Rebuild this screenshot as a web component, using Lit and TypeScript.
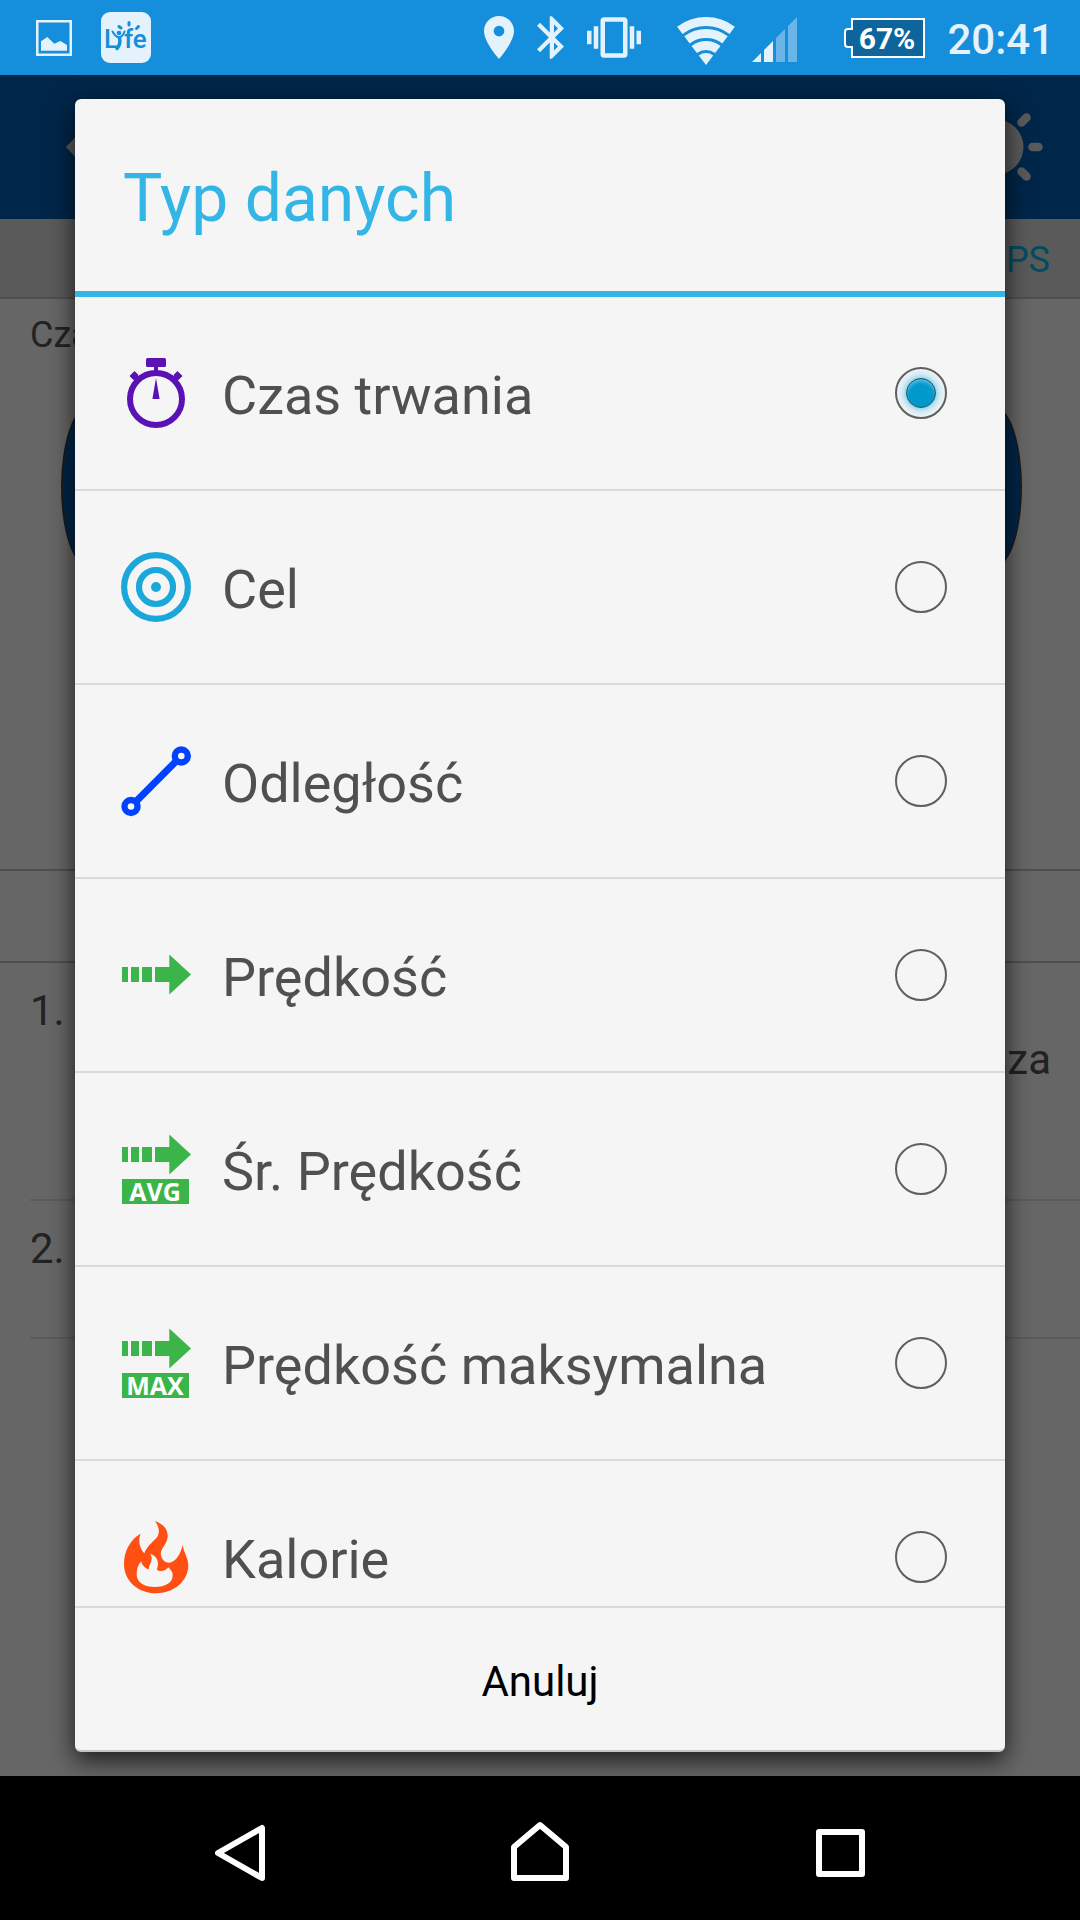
import { LitElement, html, svg, css } from "lit";
import type { SVGTemplateResult } from "lit";
import { customElement, state, property } from "lit/decorators.js";

type IconName = "time" | "target" | "distance" | "speed" | "avg" | "max" | "fire";

interface DataType {
  id: string;
  label: string;
  icon: IconName;
}

const DATA_TYPES: DataType[] = [
  { id: "duration", label: "Czas trwania", icon: "time" },
  { id: "goal", label: "Cel", icon: "target" },
  { id: "distance", label: "Odległość", icon: "distance" },
  { id: "speed", label: "Prędkość", icon: "speed" },
  { id: "avg-speed", label: "Śr. Prędkość", icon: "avg" },
  { id: "max-speed", label: "Prędkość maksymalna", icon: "max" },
  { id: "calories", label: "Kalorie", icon: "fire" },
];

/* Dashed arrow; cy is the vertical centre of its shaft. */
const arrow = (cy: number) => svg`
  <g fill="#3bb54a" transform="translate(0 ${cy})">
    <path d="M2-7.5h6v15H2zM11-7.5h8v15h-8zM22-7.5h10v15H22zM35-7.5h14.3V-20L71 0 49.3 20V7.5H35z"/>
  </g>`;

const badge = (label: string) => svg`
  <rect x="2" y="46" width="67" height="25" fill="#3bb54a"/>
  <text x="35" y="68" text-anchor="middle" fill="#fff" font-family="'Open Sans', sans-serif"
    font-weight="700" font-size="25">${label}</text>`;

const ICONS: Record<IconName, SVGTemplateResult> = {
  time: svg`
    <g fill="#5a12b4">
      <rect x="26" y="1" width="20" height="9" rx="1.5"/>
      <rect x="34" y="9" width="4" height="6"/>
      <path d="M36 21l3.6 21h-7.2z"/>
    </g>
    <g fill="none" stroke="#5a12b4">
      <circle cx="36" cy="42" r="26" stroke-width="6"/>
      <path d="M12 16.5l4 4M60 16.5l-4 4" stroke-width="7"/>
      <path d="M14 18.5l6 6M58 18.5l-6 6" stroke-width="6"/>
    </g>`,
  target: svg`
    <g fill="none" stroke="#1ba7da" stroke-width="6.2">
      <circle cx="36" cy="36" r="31.9"/>
      <circle cx="36" cy="36" r="17"/>
    </g>
    <circle cx="36" cy="36" r="5" fill="#1ba7da"/>`,
  distance: svg`
    <g fill="none" stroke="#0042ff" stroke-width="6.4">
      <circle cx="61.3" cy="11" r="6.5"/>
      <circle cx="11" cy="61.5" r="6.5"/>
      <path d="M16 56.5L56.3 16" stroke-width="7"/>
    </g>`,
  speed: arrow(35.5),
  avg: svg`${arrow(21.5)}${badge("AVG")}`,
  max: svg`${arrow(21.5)}${badge("MAX")}`,
  fire: svg`
    <path fill="#ff4f12" fill-rule="evenodd" d="M35 .3C42.5 2.5 48.5 8 47.6 16.5C47 23 41 27 40.8 32.5
      C41 38 44.5 41.5 48.8 41.7C56 41.3 60.5 33 62.7 24C63.5 31 68 36 68.3 44
      C68.5 60 54 72.3 36 72.3C18 72.3 4 60 4 43C4 30.5 10 19 20.5 12.8
      C18 20 19.5 27.500 24.3 32.3C26.5 26 32 21.5 35.5 18C40.500 13 39.5 6 35 .3Z
      M21.2 40.300C22 44.500 24.500 47 29 48.500C28 43 34.500 40 30.300 33C36.500 34.500 40 41 36.800 48.500
      C40 51.500 45.500 50 48.300 46.300C50 48.500 52.700 50 52.700 54.500C52.500 62 45 66 35 66
      C24.500 66 16.700 61.500 16.700 53.500C16.700 48 18 44 21.200 40.300Z"/>`,
};

@customElement("status-bar")
class StatusBar extends LitElement {
  static styles = css`
    :host {
      display: flex;
      align-items: center;
      height: 75px;
      padding: 0 26px 0 36px;
      background: #158edb;
      color: #e4f2fb;
      font-family: Roboto, sans-serif;
    }
    svg {
      display: block;
      flex: none;
    }
    .notifications,
    .radio-state,
    .signal-state,
    .power {
      display: flex;
      align-items: center;
    }
    .notifications {
      gap: 29px;
      margin-right: auto;
    }
    .radio-state {
      gap: 23px;
    }
    .signal-state {
      gap: 17px;
      margin-left: 36px;
    }
    .power {
      gap: 22px;
      margin-left: 47px;
    }
    .clock {
      font-size: 42px;
      font-weight: 500;
      line-height: 48px;
      padding-top: 4px;
    }
  `;

  render() {
    return html`
      <div class="notifications">
        <svg width="36" height="36" viewBox="0 0 36 36">
          <rect x="1.25" y="1.25" width="33.5" height="33.5" fill="none" stroke="#e4f2fb" stroke-width="2.5" />
          <path fill="#e4f2fb" d="M5 21.3L11.3 17l7 6.7L24.3 21 31 25v5.7H5z" />
        </svg>
        <svg width="50" height="51" viewBox="0 0 50 51">
          <rect width="50" height="51" rx="9" fill="#e4f2fb" />
          <g fill="#158edb" font-family="Roboto, sans-serif" font-weight="500" font-size="26">
            <text x="3" y="36">L</text>
            <text x="23" y="36">fe</text>
          </g>
          <g stroke="#158edb" fill="none" stroke-linecap="round">
            <path d="M11.5 19.5Q14 24.5 18 25.5Q22 24.5 23.5 19.5" stroke-width="2" />
            <path d="M18.5 26Q20 32 16 36.5" stroke-width="3.5" />
            <path d="M18 14.5l2 1.5M28 10.5v2.5M37.5 14.5L35.5 16.5" stroke-width="3" />
          </g>
          <circle cx="18" cy="21" r="2.3" fill="#158edb" />
        </svg>
      </div>
      <div class="radio-state">
        <svg width="30" height="43" viewBox="5 2 14 20">
          <path
            fill="#e4f2fb"
            d="M12 2C8.13 2 5 5.13 5 9c0 5.25 7 13 7 13s7-7.75 7-13c0-3.87-3.13-7-7-7zm0 9.5a2.5 2.5 0 0 1 0-5 2.5 2.5 0 0 1 0 5z"
          />
        </svg>
        <svg width="27" height="43" viewBox="5 2 12.71 20">
          <path
            fill="#e4f2fb"
            d="M17.71 7.71L12 2h-1v7.59L6.41 5 5 6.41 10.59 12 5 17.59 6.41 19 11 14.41V22h1l5.71-5.71-4.3-4.29 4.3-4.29zM13 5.83l1.88 1.88L13 9.59V5.83zm1.88 10.46L13 18.17v-3.76l1.88 1.88z"
          />
        </svg>
        <svg width="54" height="41" viewBox="0 3 24 18">
          <path
            fill="#e4f2fb"
            d="M0 15h2V9H0v6zm3 2h2V7H3v10zm19-8v6h2V9h-2zm-3 8h2V7h-2v10zM16.5 3h-9C6.67 3 6 3.67 6 4.5v15c0 .83.67 1.5 1.5 1.5h9c.83 0 1.5-.67 1.5-1.5v-15c0-.83-.67-1.5-1.5-1.5zM16 19H8V5h8v14z"
          />
        </svg>
      </div>
      <div class="signal-state">
        <svg width="58" height="54" viewBox="0 0 58 54">
          <g fill="none" stroke="#e4f2fb" stroke-width="9">
            <path d="M2.8 19.3A43.5 43.5 0 0 1 55.2 19.3" />
            <path d="M10 28.9A31.5 31.5 0 0 1 48 28.9" />
            <path d="M17.2 38.5A19.5 19.5 0 0 1 40.8 38.5" />
          </g>
          <path fill="#e4f2fb" d="M29 54L21.8 44.4A12 12 0 0 1 36.2 44.4z" />
        </svg>
        <svg width="45" height="48" viewBox="0 0 45 48">
          <path fill="#e4f2fb" d="M0 48L9 39v9zM12 36L21 27v21h-9z" />
          <path fill="#6ab5e8" d="M24 24L33 15v33h-9zM36 12L45 3v45h-9z" />
        </svg>
      </div>
      <div class="power">
        <svg width="81" height="40" viewBox="0 0 81 40">
          <path fill="#0d659c" stroke="#fff" stroke-width="2" d="M8 1h72v38H8V29H4q-3 0-3-3V14q0-3 3-3h4z" />
          <text x="43" y="31" text-anchor="middle" fill="#fff" font-family="Roboto, sans-serif" font-weight="700" font-size="30">67%</text>
        </svg>
        <time class="clock">20:41</time>
      </div>
    `;
  }
}

@customElement("training-screen")
class TrainingScreen extends LitElement {
  static styles = css`
    :host {
      display: flex;
      flex-direction: column;
      background: #fff;
      color: #555;
      font-family: Roboto, sans-serif;
    }
    .app-bar {
      display: flex;
      align-items: center;
      justify-content: space-between;
      height: 144px;
      padding: 0 36px 0 66px;
      box-sizing: border-box;
      background: #005fb6;
    }
    .gps {
      height: 80px;
      padding: 14px 30px 0 0;
      box-sizing: border-box;
      border-bottom: 2px solid #c5c5c5;
      background: #e1e1e1;
      color: #00c0f0;
      font-size: 36px;
      line-height: 54px;
      text-align: right;
    }
    .hero {
      display: flex;
      flex-direction: column;
      gap: 48px;
      height: 570px;
      padding: 12px 30px 0;
      box-sizing: border-box;
    }
    .caption {
      font-size: 36px;
      line-height: 48px;
    }
    .value {
      height: 160px;
      margin: 0 28px 0 31px;
      box-sizing: border-box;
      border: 2px solid #444;
      border-radius: 27px / 80px;
      background: #005fb6;
    }
    .strip {
      height: 90px;
      border: solid #c5c5c5;
      border-width: 2px 0;
    }
    .item {
      display: flex;
      justify-content: space-between;
      min-height: 138px;
      padding: 23px 29px 0 0;
      margin-left: 30px;
      box-sizing: border-box;
      border-bottom: 2px solid #e4e4e4;
      font-size: 42px;
      line-height: 50px;
    }
    .tall {
      min-height: 238px;
    }
    .detail {
      padding-top: 49px;
    }
  `;

  render() {
    return html`
      <div class="app-bar">
        <svg width="48" height="72" viewBox="0 0 48 72">
          <path fill="#e1e1e1" d="M0 36L28 6l8 8-20 22 20 22-8 8z" />
        </svg>
        <svg width="96" height="96" viewBox="0 0 96 96">
          <circle cx="48" cy="48" r="27.5" fill="#e1e1e1" />
          <path
            stroke="#e1e1e1"
            stroke-width="8.5"
            stroke-linecap="round"
            d="M84.5 48h6M73.5 23.5l5-5M73.5 72.5l5 5M48 11.5v-6M48 84.5v6M11.5 48h-6M22.5 23.5l-5-5M22.5 72.5l-5 5"
          />
        </svg>
      </div>
      <div class="gps">GPS</div>
      <div class="hero">
        <div class="caption">Czas trwania</div>
        <div class="value"></div>
      </div>
      <div class="strip"></div>
      <div class="item tall">
        <span>1.</span>
        <span class="detail">Cisza</span>
      </div>
      <div class="item"><span>2.</span></div>
    `;
  }
}

@customElement("type-dialog")
class TypeDialog extends LitElement {
  @property({ attribute: false }) options: DataType[] = [];
  @state() private selected = "duration";

  static styles = css`
    :host {
      display: flex;
      flex-direction: column;
      min-height: 0;
      box-sizing: border-box;
      overflow: hidden;
      border-radius: 6px;
      border-bottom: 2px solid #c4c6c5;
      background: #f5f5f5;
      color: #505050;
      font-family: Roboto, sans-serif;
    }
    .title {
      flex: none;
      height: 198px;
      margin: 0;
      padding: 8px 48px 0;
      box-sizing: border-box;
      border-bottom: 6px solid #33b5e5;
      color: #33b5e5;
      font-size: 66px;
      font-weight: 400;
      line-height: 184px;
    }
    .list {
      flex: 1;
      min-height: 0;
      margin: 0;
      padding: 0;
      border: 0;
      overflow-y: auto;
      scrollbar-width: none;
    }
    .row {
      display: flex;
      align-items: center;
      gap: 30px;
      height: 192px;
      padding: 0 58px 0 45px;
      border-bottom: 2px solid #dadada;
      cursor: pointer;
    }
    .icon {
      display: block;
      flex: none;
      overflow: visible;
    }
    .label {
      flex: 1;
      padding-top: 6px;
      font-size: 54px;
      line-height: 64px;
    }
    .radio {
      appearance: none;
      flex: none;
      display: grid;
      place-items: center;
      width: 52px;
      height: 52px;
      margin: 0;
      box-sizing: border-box;
      border: 2px solid #5f5f5f;
      border-radius: 50%;
    }
    .radio:checked {
      background: radial-gradient(circle, #9dd7ed 15px, #d3ebf4 19px, #f0f4f5 24px);
    }
    .radio:checked::before {
      content: "";
      width: 30px;
      height: 30px;
      box-sizing: border-box;
      border: 1px solid #2f5666;
      border-radius: 50%;
      background: #0099cc;
      box-shadow: inset 0 3px 3px #4bb8dc;
    }
    .cancel {
      flex: none;
      height: 144px;
      padding: 4px 0 0;
      border: 0;
      border-top: 2px solid #dadada;
      background: none;
      color: #000;
      font-family: inherit;
      font-size: 42px;
      cursor: pointer;
    }
  `;

  render() {
    return html`
      <h1 class="title" id="title">Typ danych</h1>
      <fieldset class="list" aria-labelledby="title">
        ${this.options.map(
          (o) => html`
            <label class="row" for=${o.id}>
              <svg class="icon" width="72" height="72" viewBox="0 0 72 72" aria-hidden="true">${ICONS[o.icon]}</svg>
              <span class="label">${o.label}</span>
              <input
                class="radio"
                type="radio"
                name="data-type"
                id=${o.id}
                .value=${o.id}
                .checked=${this.selected === o.id}
                @change=${() => (this.selected = o.id)}
              />
            </label>
          `,
        )}
      </fieldset>
      <button class="cancel" type="button">Anuluj</button>
    `;
  }
}

@customElement("nav-bar")
class NavBar extends LitElement {
  static styles = css`
    :host {
      display: grid;
      grid-template-columns: repeat(3, 1fr);
      height: 144px;
      padding: 0 90px;
      background: #000;
    }
    .key {
      display: grid;
      place-items: center;
      padding: 0;
      border: 0;
      background: none;
      cursor: pointer;
    }
  `;

  private key(label: string, d: string) {
    return html`
      <button class="key" type="button" aria-label=${label}>
        <svg width="72" height="72" viewBox="0 0 72 72" fill="none" stroke="#fff" stroke-width="6" stroke-linejoin="round">
          <path d=${d} />
        </svg>
      </button>
    `;
  }

  render() {
    return html`
      ${this.key("Wstecz", "M14 41L58 16V66Z")}
      ${this.key("Ekran główny", "M36 13L62 35V66H10V35Z")}
      ${this.key("Ostatnie", "M15 20H58V62H15Z")}
    `;
  }
}

@customElement("app-root")
class AppRoot extends LitElement {
  static styles = css`
    :host {
      display: flex;
      flex-direction: column;
      height: 100vh;
    }
    status-bar,
    nav-bar {
      flex: none;
    }
    .stage {
      flex: 1;
      min-height: 0;
      display: grid;
      grid-template: minmax(0, 1fr) / minmax(0, 1fr);
      overflow: hidden;
    }
    .backdrop,
    .scrim {
      grid-area: 1 / 1;
    }
    .scrim {
      display: grid;
      grid-template: minmax(0, 1fr) / minmax(0, 1fr);
      padding: 24px 75px;
      background: rgba(0, 0, 0, 0.6);
      z-index: 1;
    }
    .dialog {
      box-shadow: 0 8px 24px rgba(0, 0, 0, 0.74);
    }
  `;

  render() {
    return html`
      <status-bar></status-bar>
      <div class="stage">
        <training-screen class="backdrop"></training-screen>
        <div class="scrim">
          <type-dialog class="dialog" role="dialog" .options=${DATA_TYPES}></type-dialog>
        </div>
      </div>
      <nav-bar></nav-bar>
    `;
  }
}
